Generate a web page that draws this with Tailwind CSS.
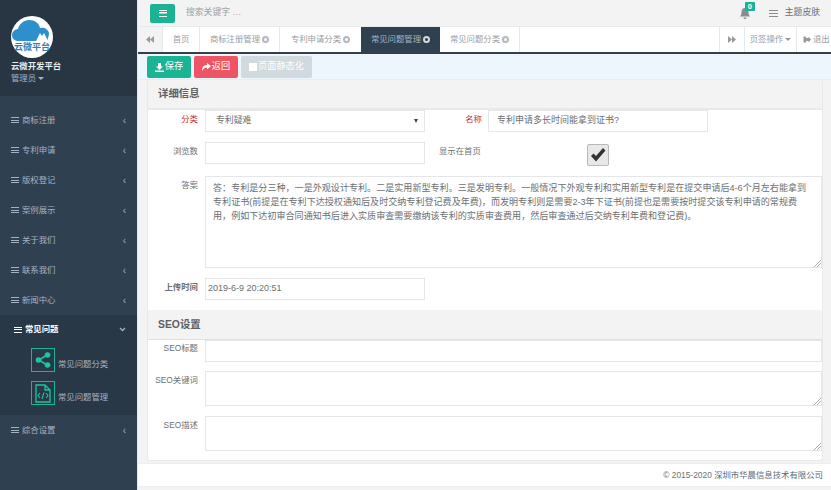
<!DOCTYPE html>
<html lang="zh-CN">
<head>
    <meta charset="UTF-8">
    <title>云微开发平台</title>
    <script src="https://cdn.jsdelivr.net/npm/@tailwindcss/browser@4"></script>
</head>
<body class="overflow-hidden bg-[#f3f3f4] text-[#6c6f71] text-[8.4px] font-['Liberation_Sans','Noto_Sans_CJK_SC',sans-serif]">
<div class="flex w-[831px] h-[490px] overflow-hidden">

    <!-- sidebar -->
    <aside class="w-[137px] shrink-0 bg-[#2f4050] text-[#a7b1c2]">
        <div class="h-[96px] bg-[#283644] pt-[16px] pl-[11px]">
            <svg width="42" height="42" viewBox="0 0 42 42" class="block">
                <circle cx="21" cy="21" r="21" fill="#fff"/>
                <path d="M8 25c-4 0-7-2-7-6 0-3 3-6 6-6 1-5 6-9 11-9 6 0 10 3 11 8 4-1 8 1 9 5 0 3-1 5-2 8z" fill="#2d8fcb"/>
                <path d="M25 25l4-8 2 3 2-3 4 8z" fill="#fff"/>
                <text x="21" y="34" text-anchor="middle" font-size="9" font-weight="700" fill="#2d7fb5">云微平台</text>
            </svg>
            <div class="mt-[2px] text-[#e8ecf0] font-bold leading-[13px]">云微开发平台</div>
            <div class="leading-[11px] flex items-center gap-[2px]">管理员<span class="border-x-[3px] border-t-[3px] border-x-transparent border-t-[#a7b1c2]"></span></div>
        </div>

        <nav class="mt-[9px]">
            <a class="flex items-center h-[30px] px-[11px]"><span class="mr-[3px] w-[8px] h-[6px] border-y-[1.5px] border-[#a7b1c2] bg-[linear-gradient(#a7b1c2,#a7b1c2)] bg-[length:100%_1px] bg-center bg-no-repeat"></span><span class="flex-1">商标注册</span><span class="text-[10px]">‹</span></a>
            <a class="flex items-center h-[30px] px-[11px]"><span class="mr-[3px] w-[8px] h-[6px] border-y-[1.5px] border-[#a7b1c2] bg-[linear-gradient(#a7b1c2,#a7b1c2)] bg-[length:100%_1px] bg-center bg-no-repeat"></span><span class="flex-1">专利申请</span><span class="text-[10px]">‹</span></a>
            <a class="flex items-center h-[30px] px-[11px]"><span class="mr-[3px] w-[8px] h-[6px] border-y-[1.5px] border-[#a7b1c2] bg-[linear-gradient(#a7b1c2,#a7b1c2)] bg-[length:100%_1px] bg-center bg-no-repeat"></span><span class="flex-1">版权登记</span><span class="text-[10px]">‹</span></a>
            <a class="flex items-center h-[30px] px-[11px]"><span class="mr-[3px] w-[8px] h-[6px] border-y-[1.5px] border-[#a7b1c2] bg-[linear-gradient(#a7b1c2,#a7b1c2)] bg-[length:100%_1px] bg-center bg-no-repeat"></span><span class="flex-1">案例展示</span><span class="text-[10px]">‹</span></a>
            <a class="flex items-center h-[30px] px-[11px]"><span class="mr-[3px] w-[8px] h-[6px] border-y-[1.5px] border-[#a7b1c2] bg-[linear-gradient(#a7b1c2,#a7b1c2)] bg-[length:100%_1px] bg-center bg-no-repeat"></span><span class="flex-1">关于我们</span><span class="text-[10px]">‹</span></a>
            <a class="flex items-center h-[30px] px-[11px]"><span class="mr-[3px] w-[8px] h-[6px] border-y-[1.5px] border-[#a7b1c2] bg-[linear-gradient(#a7b1c2,#a7b1c2)] bg-[length:100%_1px] bg-center bg-no-repeat"></span><span class="flex-1">联系我们</span><span class="text-[10px]">‹</span></a>
            <a class="flex items-center h-[30px] px-[11px]"><span class="mr-[3px] w-[8px] h-[6px] border-y-[1.5px] border-[#a7b1c2] bg-[linear-gradient(#a7b1c2,#a7b1c2)] bg-[length:100%_1px] bg-center bg-no-repeat"></span><span class="flex-1">新闻中心</span><span class="text-[10px]">‹</span></a>

            <div class="h-[100px] bg-[#293846]">
                <a class="flex items-center h-[29px] pl-[14px] pr-[11px] text-white font-bold"><span class="mr-[3px] w-[8px] h-[6px] border-y-[1.5px] border-white bg-[linear-gradient(#fff,#fff)] bg-[length:100%_1px] bg-center bg-no-repeat"></span><span class="flex-1">常见问题</span>
                    <svg width="7" height="5" viewBox="0 0 7 5"><path d="M1 1l2.500 2.500L6 1" fill="none" stroke="#a7b1c2" stroke-width="1.3"/></svg>
                </a>
                <a class="flex items-start h-[24px] mt-[4px] ml-[31px] gap-[3px]">
                    <span class="w-[24px] h-[24px] border border-[#1ab394] flex items-center justify-center">
                        <svg width="16" height="16" viewBox="0 0 16 16"><path d="M12 3L4 8l8 5" fill="none" stroke="#1fc4a2" stroke-width="1.6"/><circle cx="12.500" cy="3" r="2.800" fill="#1fc4a2"/><circle cx="3.500" cy="8" r="2.800" fill="#1fc4a2"/><circle cx="12.500" cy="13" r="2.800" fill="#1fc4a2"/></svg>
                    </span>
                    <span class="pt-[11px] leading-[11px]">常见问题分类</span>
                </a>
                <a class="flex items-start h-[24px] mt-[9px] ml-[31px] gap-[3px]">
                    <span class="w-[24px] h-[24px] border border-[#1ab394] flex items-center justify-center">
                        <svg width="16" height="19" viewBox="0 0 16 19"><path d="M1 1h9l5 5v12H1zM10 1v5h5" fill="none" stroke="#1fc4a2" stroke-width="1.3"/><path d="M5 9l-2 2.500L5 14M11 9l2 2.500L11 14M9 8.500l-2 6.500" fill="none" stroke="#1fc4a2" stroke-width="1.1"/></svg>
                    </span>
                    <span class="pt-[11px] leading-[11px]">常见问题管理</span>
                </a>
            </div>

            <a class="flex items-center h-[30px] px-[11px]"><span class="mr-[3px] w-[8px] h-[6px] border-y-[1.5px] border-[#a7b1c2] bg-[linear-gradient(#a7b1c2,#a7b1c2)] bg-[length:100%_1px] bg-center bg-no-repeat"></span><span class="flex-1">综合设置</span><span class="text-[10px]">‹</span></a>
        </nav>
    </aside>

    <!-- main -->
    <main class="flex-1 min-w-0 flex flex-col border-l border-[#e7eaec]">
        <header class="h-[27px] flex items-center pl-[12px] pr-[11px] border-b border-[#e7eaec]">
            <button class="w-[25px] h-[19px] rounded-[2px] bg-[#1ab394] flex items-center justify-center">
                <span class="w-[8px] h-[7px] border-y-[1.5px] border-white bg-[linear-gradient(#fff,#fff)] bg-[length:100%_1.5px] bg-center bg-no-repeat"></span>
            </button>
            <span class="ml-[11px] text-[#a0a2a4] text-[8.8px]">搜索关键字 …</span>
            <div class="ml-auto flex items-center">
                <div class="relative mr-[19px]">
                    <svg width="10" height="11" viewBox="0 0 10 11" class="block"><path d="M5 0c2.500 0 3.500 2 3.500 4 0 2 .5 3 1.500 4.500H0C1 7 1.500 6 1.500 4 1.500 2 2.500 0 5 0zM3.500 9.500h3C6.500 10.500 5.800 11 5 11s-1.500-.5-1.500-1.500z" fill="#8a8d8f"/></svg>
                    <span class="absolute -top-[6px] left-[5px] w-[10px] h-[9px] rounded-[1px] bg-[#1ab394] text-white text-[7.5px] leading-[9px] text-center font-bold">0</span>
                </div>
                <span class="w-[9px] h-[7px] mr-[7px] border-y-[1.5px] border-[#8a8d8f] bg-[linear-gradient(#8a8d8f,#8a8d8f)] bg-[length:100%_1px] bg-center bg-no-repeat"></span>
                <span class="text-[8.8px]">主题皮肤</span>
            </div>
        </header>

        <div class="h-[27px] flex bg-white border-b-2 border-[#2f4050] text-[#9b9d9f]">
            <span class="w-[25px] flex items-center justify-center bg-[#f3f3f4] border-r border-[#e7eaec]">
                <svg width="8" height="7" viewBox="0 0 8 7"><path d="M4 0v7L0 3.500zM8 0v7L4 3.500z" fill="#999"/></svg>
            </span>
            <span class="w-[37px] flex items-center justify-center border-r border-[#e7eaec]">首页</span>
            <span class="w-[80px] flex items-center justify-center gap-[2px] border-r border-[#e7eaec]">商标注册管理<span class="w-[7px] h-[7px] rounded-full border-2 border-[#b5b7b9] bg-white"></span></span>
            <span class="w-[81px] flex items-center justify-center gap-[2px]">专利申请分类<span class="w-[7px] h-[7px] rounded-full border-2 border-[#b5b7b9] bg-white"></span></span>
            <span class="w-[79px] flex items-center justify-center gap-[2px] bg-[#2f4050] text-[#a7b1c2]">常见问题管理<span class="w-[7px] h-[7px] rounded-full border-2 border-[#d5d9de] bg-[#2f4050]"></span></span>
            <span class="w-[80px] flex items-center justify-center gap-[2px] border-r border-[#e7eaec]">常见问题分类<span class="w-[7px] h-[7px] rounded-full border-2 border-[#b5b7b9] bg-white"></span></span>
            <span class="ml-auto w-[26px] flex items-center justify-center border-x border-[#e7eaec]">
                <svg width="8" height="7" viewBox="0 0 8 7"><path d="M0 0v7l4-3.500zM4 0v7l4-3.500z" fill="#999"/></svg>
            </span>
            <span class="w-[52px] flex items-center justify-center gap-[2px] border-r border-[#e7eaec]">页签操作<span class="border-x-[3px] border-t-[3px] border-x-transparent border-t-[#999]"></span></span>
            <span class="w-[34px] flex items-center pl-[6px] gap-[2px] overflow-hidden whitespace-nowrap">
                <svg width="8" height="7" viewBox="0 0 8 7" class="shrink-0"><path d="M3 .5H.5v6H3M3 2h2.500V.5L8 3.500 5.500 6.500V5H3z" fill="#999"/></svg>退出
            </span>
        </div>

        <div class="h-[25px] mt-px flex items-center gap-[3px] pl-[9px] bg-[#eef6fd] border-b border-[#ececec] text-[9.2px]">
            <button class="w-[44px] h-[22px] rounded-[2px] bg-[#1ab394] text-white flex items-center justify-center gap-px">
                <svg width="9" height="9" viewBox="0 0 9 9"><path d="M3 0h3v3.500h2L4.500 7 1 3.500h2zM0 7.500h9V9H0z" fill="#fff"/></svg>保存
            </button>
            <button class="w-[44px] h-[22px] rounded-[2px] bg-[#ed5565] text-white flex items-center justify-center gap-px">
                <svg width="9" height="8" viewBox="0 0 9 8"><path d="M5 0l4 3.300L5 6.500V4.500C3 4.500 1.500 5.500 0 8c0-4 2-6 5-6z" fill="#fff"/></svg>返回
            </button>
            <button class="w-[71px] h-[22px] rounded-[2px] bg-[#d1dade] text-white flex items-center justify-center gap-px">
                <span class="w-[8px] h-[8px] bg-white"></span>页面静态化
            </button>
        </div>

        <!-- form panel -->
        <section class="ml-[9px] mr-[8px] h-[381px] bg-white rounded-[3px] border-x border-b border-[#e7eaec] overflow-hidden">
            <h2 class="h-[30px] pl-[10px] flex items-center bg-[#f3f3f4] border-b-2 border-[#e7eaec] text-[10.4px] font-bold text-[#5e6062]">详细信息</h2>

            <div class="flex h-[22px] mb-[10px]">
                <label class="w-[50px] text-right pt-[3px] text-[#c9302c]">分类</label>
                <div class="ml-[7px] w-[220px] h-[22px] border border-[#e5e6e7] flex items-center justify-between pl-[10px] pr-[6px] text-[8.9px]">专利疑难<span class="border-x-[2.5px] border-t-[4px] border-x-transparent border-t-[#444]"></span></div>
                <label class="ml-[39px] w-[18px] text-right pt-[3px] text-[#c9302c] whitespace-nowrap">名称</label>
                <div class="ml-[6px] w-[220px] h-[22px] border border-[#e5e6e7] flex items-center pl-[8px] text-[9px]">专利申请多长时间能拿到证书?</div>
            </div>

            <div class="flex h-[24px] mb-[10px]">
                <label class="w-[50px] text-right pt-[3px]">浏览数</label>
                <div class="ml-[7px] w-[220px] h-[22px] border border-[#e5e6e7]"></div>
                <label class="ml-[14px] pt-[3px]">显示在首页</label>
                <span class="ml-[106px] mt-[2px] w-[22px] h-[22px] rounded-[2px] bg-[#e8e8e8] border border-[#b8b8b8] flex items-center justify-center">
                    <svg width="16" height="14" viewBox="0 0 16 14"><path d="M1 8l2.500-2.500L6 8l7-8 2.500 2.500L6 13.500z" fill="#333"/></svg>
                </span>
            </div>

            <div class="flex h-[92px] mb-[10px]">
                <label class="w-[50px] text-right pt-[3px]">答案</label>
                <div class="relative ml-[7px] w-[617px] h-[92px] border border-[#e5e6e7] pl-[7px] pr-[8px] pt-[4px] leading-[14px] text-[9.07px]">答：专利是分三种，一是外观设计专利。二是实用新型专利。三是发明专利。一般情况下外观专利和实用新型专利是在提交申请后4-6个月左右能拿到专利证书(前提是在专利下达授权通知后及时交纳专利登记费及年费)，而发明专利则是需要2-3年下证书(前提也是需要按时提交该专利申请的常规费用，例如下达初审合同通知书后进入实质审查需要缴纳该专利的实质审查费用，然后审查通过后交纳专利年费和登记费)。
                    <svg width="7" height="7" viewBox="0 0 7 7" class="absolute right-0 bottom-0"><path d="M0 7l7-7M3 7l4-4" stroke="#999" stroke-width=".8"/></svg>
                </div>
            </div>

            <div class="flex h-[22px] mb-[10px]">
                <label class="w-[50px] text-right pt-[3px] font-bold">上传时间</label>
                <div class="ml-[7px] w-[220px] h-[22px] border border-[#e5e6e7] flex items-center pl-[2px] text-[9px]">2019-6-9 20:20:51</div>
            </div>

            <h2 class="h-[30px] pl-[10px] flex items-center bg-[#f3f3f4] border-b border-[#e0e0e0] text-[10.4px] font-bold text-[#5e6062]">SEO设置</h2>

            <div class="flex h-[22px] mb-[9px]">
                <label class="w-[50px] text-right pt-[2px]">SEO标题</label>
                <div class="ml-[7px] w-[617px] h-[22px] border border-[#e5e6e7]"></div>
            </div>
            <div class="flex h-[35px] mb-[10px]">
                <label class="w-[50px] text-right pt-[3px] whitespace-nowrap">SEO关键词</label>
                <div class="relative ml-[7px] w-[617px] h-[35px] border border-[#e5e6e7]">
                    <svg width="7" height="7" viewBox="0 0 7 7" class="absolute right-0 bottom-0"><path d="M0 7l7-7M3 7l4-4" stroke="#999" stroke-width=".8"/></svg>
                </div>
            </div>
            <div class="flex h-[35px]">
                <label class="w-[50px] text-right pt-[3px]">SEO描述</label>
                <div class="relative ml-[7px] w-[617px] h-[35px] border border-[#e5e6e7]">
                    <svg width="7" height="7" viewBox="0 0 7 7" class="absolute right-0 bottom-0"><path d="M0 7l7-7M3 7l4-4" stroke="#999" stroke-width=".8"/></svg>
                </div>
            </div>
        </section>

        <footer class="mt-[2px] h-[24px] bg-white border-y border-[#eeeeee] flex items-center justify-end pr-[8px]">© 2015-2020&nbsp;<span class="text-[#5a6a7a]">深圳市华晨信息技术有限公司</span></footer>
    </main>
</div>
</body>
</html>
